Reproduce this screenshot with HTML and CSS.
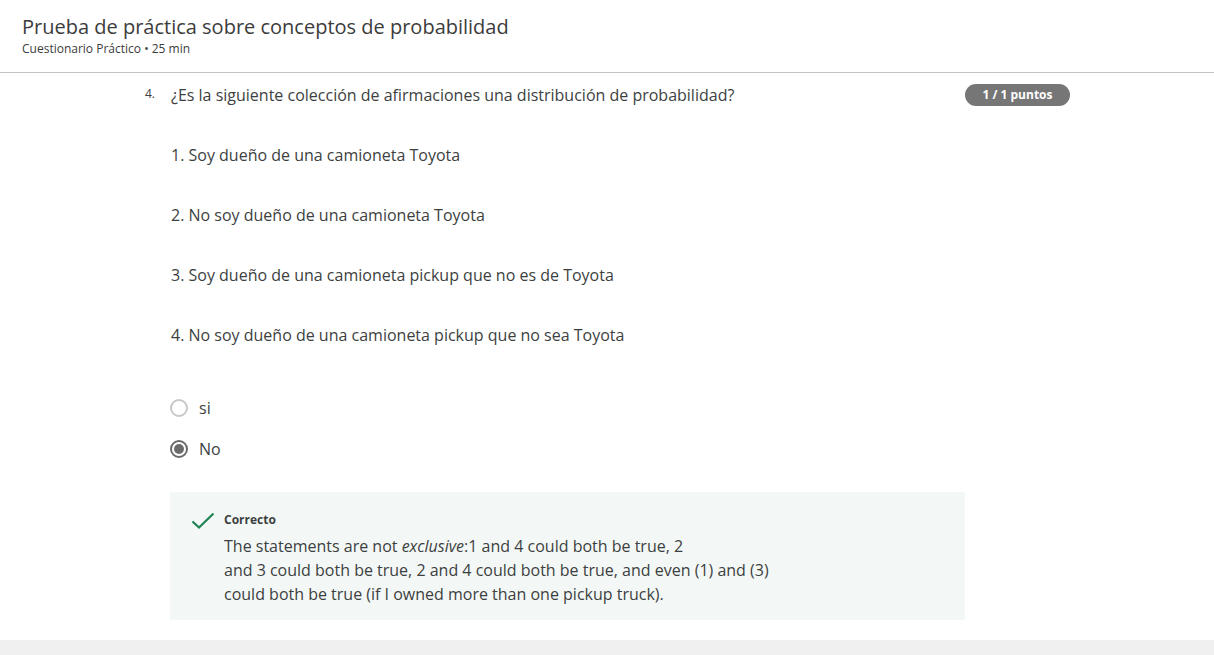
FILE: index.html
```html
<!DOCTYPE html>
<html lang="es">
<head>
<meta charset="utf-8">
<link rel="stylesheet" href="styles.css">
</head>
<body>
<div class="page">
  <header class="header">
    <h1 class="title">Prueba de práctica sobre conceptos de probabilidad</h1>
    <div class="subtitle">Cuestionario Práctico • 25 min</div>
  </header>
  <main class="main">
    <div class="question">
      <div class="qnum">4.</div>
      <div class="qbody">
        <div class="qhead">
          <div class="qtext">¿Es la siguiente colección de afirmaciones una distribución de probabilidad?</div>
          <span class="badge">1 / 1 puntos</span>
        </div>
        <div class="statements">
          <p>1. Soy dueño de una camioneta Toyota</p>
          <p>2. No soy dueño de una camioneta Toyota</p>
          <p>3. Soy dueño de una camioneta pickup que no es de Toyota</p>
          <p>4. No soy dueño de una camioneta pickup que no sea Toyota</p>
        </div>
        <div class="options">
          <div class="option"><span class="radio"></span><span class="olabel">si</span></div>
          <div class="option"><span class="radio checked"></span><span class="olabel">No</span></div>
        </div>
        <div class="feedback">
          <svg class="check" width="24" height="18" viewBox="0 0 24 18"><path d="M1.5 9.5 L8 15.5 L22.5 1.5" fill="none" stroke="#1f8354" stroke-width="2.2"/></svg>
          <div class="fbody">
            <div class="fhead">Correcto</div>
            <div class="ftext">The statements are not <em>exclusive</em>:1 and 4 could both be true, 2<br>and 3 could both be true, 2 and 4 could both be true, and even (1) and (3)<br>could both be true (if I owned more than one pickup truck).</div>
          </div>
        </div>
      </div>
    </div>
  </main>
  <footer class="footer"></footer>
</div>
</body>
</html>
```
FILE: styles.css
```css
html, body {
  margin: 0;
  padding: 0;
  background: #ffffff;
}
body {
  font-family: "Open Sans", "Noto Sans", sans-serif;
  color: #3d3f41;
}
.page {
  width: 1214px;
  height: 655px;
  display: flex;
  flex-direction: column;
  overflow: hidden;
}
.header {
  height: 73px;
  box-sizing: border-box;
  padding: 13px 0 0 22px;
  border-bottom: 1px solid #c4c4c4;
}
.title {
  margin: 0;
  font-size: 20px;
  font-weight: 400;
  line-height: 27px;
  color: #3c3c3c;
}
.subtitle {
  font-size: 12px;
  line-height: 17px;
  color: #3c3c3c;
}
.main {
  flex: 1;
  padding: 10px 0 0 145px;
}
.question {
  display: flex;
  width: 925px;
}
.qnum {
  width: 26px;
  font-size: 12px;
  line-height: 22px;
}
.qbody {
  flex: 1;
}
.qhead {
  display: flex;
  justify-content: space-between;
  align-items: center;
  height: 24px;
}
.qtext {
  font-size: 16px;
  line-height: 24px;
}
.badge {
  background: #767676;
  color: #fff;
  font-size: 12px;
  font-weight: 700;
  border-radius: 12px;
  width: 105px;
  height: 22px;
  line-height: 22px;
  text-align: center;
}
.statements {
  padding-top: 36px;
}
.statements p {
  margin: 0 0 36px 0;
  font-size: 16px;
  line-height: 24px;
}
.options {
  padding-top: 13px;
  display: flex;
  flex-direction: column;
  gap: 17px;
}
.option {
  display: flex;
  align-items: center;
  gap: 11px;
  height: 24px;
  margin-left: -1px;
}
.radio {
  width: 18px;
  height: 18px;
  box-sizing: border-box;
  border: 2px solid #c8c8c8;
  border-radius: 50%;
  display: flex;
  align-items: center;
  justify-content: center;
}
.radio.checked {
  border-color: #6b6b6b;
}
.radio.checked::after {
  content: "";
  width: 10px;
  height: 10px;
  border-radius: 50%;
  background: #6b6b6b;
}
.olabel {
  font-size: 16px;
  line-height: 24px;
}
.feedback {
  margin-top: 31px;
  margin-left: -1px;
  width: 795px;
  height: 128px;
  box-sizing: border-box;
  background: #f3f8f6;
  display: flex;
  padding: 19px 0 0 21px;
  gap: 9px;
}
.check {
  margin-top: 1px;
}
.fhead {
  font-size: 12px;
  font-weight: 700;
  line-height: 18px;
}
.ftext {
  font-size: 16px;
  line-height: 24px;
  margin-top: 5px;
}
.footer {
  height: 15px;
  background: #f0f0f0;
}
```
